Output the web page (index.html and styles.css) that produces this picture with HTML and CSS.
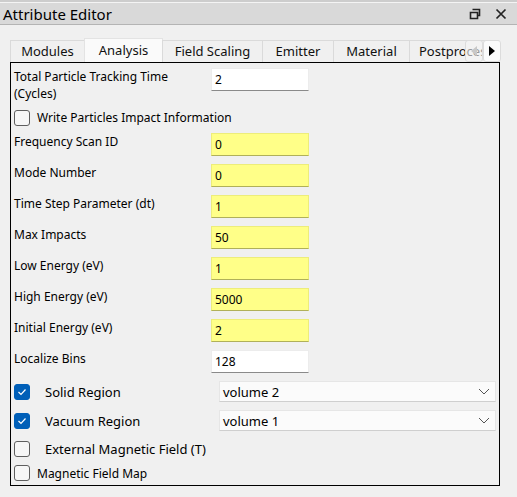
FILE: index.html
```html
<!DOCTYPE html>
<html lang="en">
<head>
  <meta charset="UTF-8" />
  <title>Attribute Editor</title>
  <link rel="stylesheet" href="styles.css">
</head>
<body>
  <div class="titlebar">
    <span class="title">Attribute Editor</span>
    <span class="title-btns">
      <svg width="12" height="12" viewBox="0 0 12 12"><path d="M3.5 1.5h7v6h-2M1.5 4.5h7v6h-7z" fill="none" stroke="#222" stroke-width="1.6"/></svg>
      <svg width="12" height="12" viewBox="0 0 12 12"><path d="M1.5 1.5l9 9M10.5 1.5l-9 9" stroke="#222" stroke-width="1.7"/></svg>
    </span>
  </div>

  <div class="tabs">
    <div class="tab t-modules">Modules</div>
    <div class="tab t-analysis active">Analysis</div>
    <div class="tab t-field">Field Scaling</div>
    <div class="tab t-emitter">Emitter</div>
    <div class="tab t-material">Material</div>
    <div class="tab t-post">Postprocess</div>
    <div class="tab-scroll">
      <span class="arrow off"><svg width="6" height="10" viewBox="0 0 6 10"><path d="M6 0v10L0 5z" fill="#c8c8c8"/></svg></span>
      <span class="arrow"><svg width="6" height="10" viewBox="0 0 6 10"><path d="M0 0v10l6-5z" fill="#000"/></svg></span>
    </div>
  </div>

  <div class="pane">
    <div class="row first">
      <label class="lbl">Total Particle Tracking Time<br>(Cycles)</label>
      <div class="field">2</div>
    </div>
    <div class="row check-row">
      <span class="cb"></span>
      <span class="cb-text">Write Particles Impact Information</span>
    </div>
    <div class="row">
      <label class="lbl">Frequency Scan ID</label>
      <div class="field req">0</div>
    </div>
    <div class="row">
      <label class="lbl">Mode Number</label>
      <div class="field req">0</div>
    </div>
    <div class="row">
      <label class="lbl">Time Step Parameter (dt)</label>
      <div class="field req">1</div>
    </div>
    <div class="row">
      <label class="lbl">Max Impacts</label>
      <div class="field req">50</div>
    </div>
    <div class="row">
      <label class="lbl">Low Energy (eV)</label>
      <div class="field req">1</div>
    </div>
    <div class="row">
      <label class="lbl">High Energy (eV)</label>
      <div class="field req">5000</div>
    </div>
    <div class="row">
      <label class="lbl">Initial Energy (eV)</label>
      <div class="field req">2</div>
    </div>
    <div class="row short">
      <label class="lbl">Localize Bins</label>
      <div class="field">128</div>
    </div>
    <div class="row combo-row">
      <span class="cb on"><svg width="10" height="8" viewBox="0 0 10 8"><path d="M1.5 4l2.5 2.5 4.5-5" fill="none" stroke="#fff" stroke-width="1.2"/></svg></span>
      <span class="cb-label">Solid Region</span>
      <div class="combo">volume 2<svg width="12" height="7" viewBox="0 0 12 7"><path d="M1 1l5 5 5-5" fill="none" stroke="#555" stroke-width="1"/></svg></div>
    </div>
    <div class="row combo-row">
      <span class="cb on"><svg width="10" height="8" viewBox="0 0 10 8"><path d="M1.5 4l2.5 2.5 4.5-5" fill="none" stroke="#fff" stroke-width="1.2"/></svg></span>
      <span class="cb-label">Vacuum Region</span>
      <div class="combo">volume 1<svg width="12" height="7" viewBox="0 0 12 7"><path d="M1 1l5 5 5-5" fill="none" stroke="#555" stroke-width="1"/></svg></div>
    </div>
    <div class="row plain-row">
      <span class="cb"></span>
      <span class="cb-label">External Magnetic Field (T)</span>
    </div>
    <div class="row plain-row last">
      <span class="cb"></span>
      <span class="cb-text">Magnetic Field Map</span>
    </div>
  </div>
</body>
</html>
```

FILE: styles.css
```css
body {
  margin: 0;
  background-color: #f0f0f0;
  font-family: "Noto Sans", sans-serif;
  font-size: 12px;
  color: #000;
  border-top: 2px solid #cdcdcd;
}

.titlebar {
  display: flex;
  align-items: center;
  justify-content: space-between;
  height: 21px;
  background-color: #d9d9d9;
  border-top: 1px solid #f4f4f4;
  border-bottom: 1px solid #b4b4b4;
  padding: 0 10px 0 3px;
}

.title {
  font-size: 15px;
}

.title-btns {
  display: flex;
  gap: 14px;
  align-items: center;
}

.tabs {
  display: flex;
  align-items: flex-end;
  position: relative;
  margin: 13px 0 0 10px;
  height: 24px;
  width: 491px;
  overflow: hidden;
  font-size: 13px;
}

.tab {
  flex-shrink: 0;
  box-sizing: border-box;
  height: 22px;
  line-height: 21px;
  background-color: #f0f0f0;
  border: 1px solid #dadada;
  border-bottom: none;
  margin-right: -1px;
  text-align: center;
  white-space: nowrap;
  color: #111;
}

.t-modules { width: 75px; }
.t-analysis { width: 79px; }
.t-field { width: 101px; }
.t-emitter { width: 72px; }
.t-material { width: 77px; }
.t-post { width: 90px; text-align: left; padding-left: 9px; }

.tab.active {
  height: 24px;
  line-height: 22px;
  background-color: #fafafa;
  border-color: #e3e3e3;
}

.tab-scroll {
  position: absolute;
  right: 0;
  top: 2px;
  display: flex;
}

.arrow {
  display: flex;
  align-items: center;
  justify-content: center;
  width: 16px;
  height: 20px;
  background-color: rgba(245, 245, 245, 0.6);
  border: 1px solid #dcdcdc;
  border-radius: 3px;
}

.arrow + .arrow {
  background-color: #fbfbfb;
}

.pane {
  box-sizing: border-box;
  width: 490px;
  height: 424px;
  margin-left: 10px;
  border: 1px solid #000;
  padding: 5px 0 0 3px;
}

.row {
  display: flex;
  align-items: flex-start;
  height: 31px;
}

.row.first {
  height: 34px;
}

.row.short {
  height: 27px;
}

.lbl {
  width: 197px;
  line-height: 16px;
  padding-top: 1px;
}

.row.first .lbl {
  line-height: 17px;
  padding-top: 0;
}

.field {
  box-sizing: border-box;
  width: 98px;
  height: 23px;
  line-height: 21px;
  padding-left: 3px;
  background-color: #ffffff;
  border: 1px solid #ececec;
  border-bottom-color: #8a8a8a;
}

.field.req {
  background-color: #ffff88;
  border-color: #eded7a;
  border-bottom-color: #b0b05a;
}

.check-row {
  align-items: center;
}

.cb {
  box-sizing: border-box;
  display: inline-flex;
  align-items: center;
  justify-content: center;
  width: 16px;
  height: 16px;
  border: 1px solid #5f5f5f;
  border-radius: 3px;
  background-color: #f7f7f7;
  flex-shrink: 0;
}

.cb.on {
  background-color: #005fb8;
  border-color: #005fb8;
}

.cb-text {
  margin-left: 7px;
}

.cb-label {
  margin-left: 15px;
  width: 174px;
  font-size: 13px;
}

.combo-row {
  align-items: center;
  height: 29px;
}

.combo {
  box-sizing: border-box;
  display: flex;
  align-items: center;
  justify-content: space-between;
  width: 277px;
  height: 21px;
  padding: 0 5px 0 3px;
  background-color: #fbfbfb;
  border: 1px solid #e6e6e6;
  border-bottom-color: #cfcfcf;
  font-size: 13px;
}

.plain-row {
  align-items: center;
  height: 28px;
}

.plain-row.last {
  height: 20px;
}
```
